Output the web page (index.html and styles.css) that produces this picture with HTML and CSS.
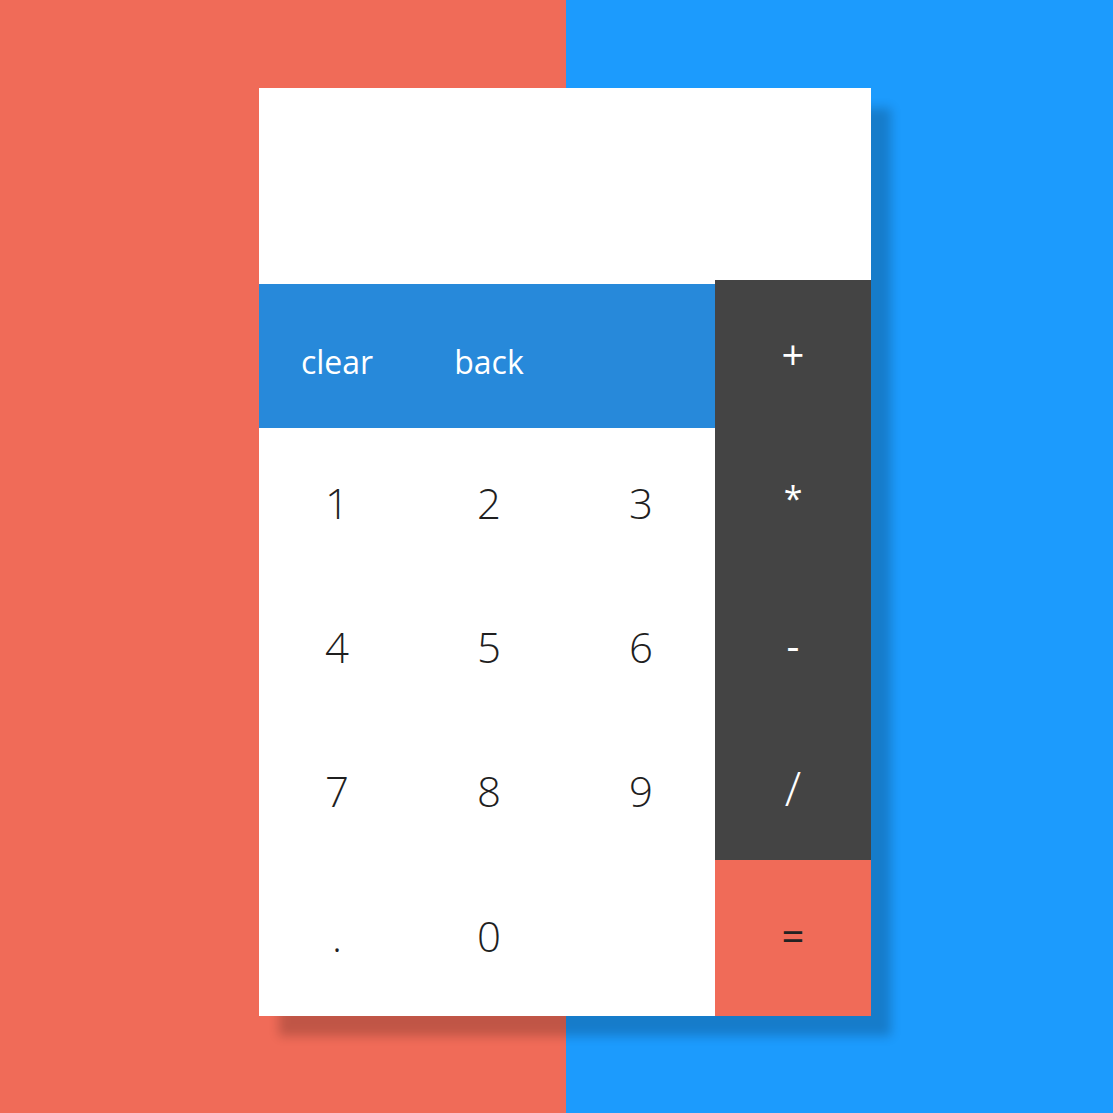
FILE: index.html
```html
<!DOCTYPE html>
<html lang="en">
<head>
<meta charset="utf-8">
<title>Calculator</title>
<link rel="stylesheet" href="styles.css">
</head>
<body>
<div class="page">
  <div class="calc">
    <div class="display"></div>
    <div class="body">
      <div class="keys">
        <div class="top-row">
          <button class="key fn">clear</button>
          <button class="key fn">back</button>
          <span class="key fn"></span>
        </div>
        <button class="key num">1</button>
        <button class="key num">2</button>
        <button class="key num">3</button>
        <button class="key num">4</button>
        <button class="key num">5</button>
        <button class="key num">6</button>
        <button class="key num">7</button>
        <button class="key num">8</button>
        <button class="key num">9</button>
        <button class="key num last">.</button>
        <button class="key num last">0</button>
        <span class="key num last"></span>
      </div>
      <div class="ops">
        <button class="key op">+</button>
        <button class="key op star">*</button>
        <button class="key op">-</button>
        <button class="key op slash">/</button>
        <button class="key eq">=</button>
      </div>
    </div>
  </div>
</div>
</body>
</html>
```
FILE: styles.css
```css
html, body {
  margin: 0;
  padding: 0;
}
body {
  width: 1113px;
  height: 1113px;
  overflow: hidden;
  background: linear-gradient(to right, #f06b58 0, #f06b58 566px, #1c9bfd 566px, #1c9bfd 100%);
  font-family: "Open Sans", "Liberation Sans", sans-serif;
  font-weight: 300;
}
.page {
  padding: 88px 0 0 259px;
}
.calc {
  width: 612px;
  background: #fff;
  box-shadow: 20px 20px 10px rgba(0, 0, 0, 0.2);
}
.display {
  height: 196px;
}
.body {
  display: flex;
}
.keys {
  width: 456px;
  display: grid;
  grid-template-columns: repeat(3, 152px);
  grid-template-rows: 144px 144px 144px 144px 156px;
}
.top-row {
  grid-column: 1 / span 3;
  display: grid;
  grid-template-columns: repeat(3, 152px);
  background: #2789da;
}
.key {
  border: 0;
  margin: 0;
  padding: 0;
  background: transparent;
  font-family: inherit;
  font-weight: inherit;
  display: flex;
  align-items: center;
  justify-content: center;
}
.fn {
  color: #fff;
  font-size: 32px;
  font-weight: 400;
  padding: 10px 0 0 4px;
}
.num {
  color: #1f1f1f;
  font-size: 42px;
  padding: 4px 0 0 4px;
}
.num.last {
  padding: 0 0 6px 4px;
}
.ops {
  width: 156px;
  margin-top: -4px;
  display: flex;
  flex-direction: column;
  background: #444;
}
.op {
  height: 145px;
  color: #fff;
  font-size: 40px;
  font-weight: 400;
  padding-top: 4px;
}
.op.star {
  font-size: 34px;
  padding-top: 0;
}
.op.slash {
  font-size: 48px;
  font-weight: 300;
  padding-top: 0;
}
.eq {
  height: 156px;
  background: #f06b58;
  color: #222;
  font-size: 40px;
  font-weight: 400;
  padding-bottom: 6px;
}
```
